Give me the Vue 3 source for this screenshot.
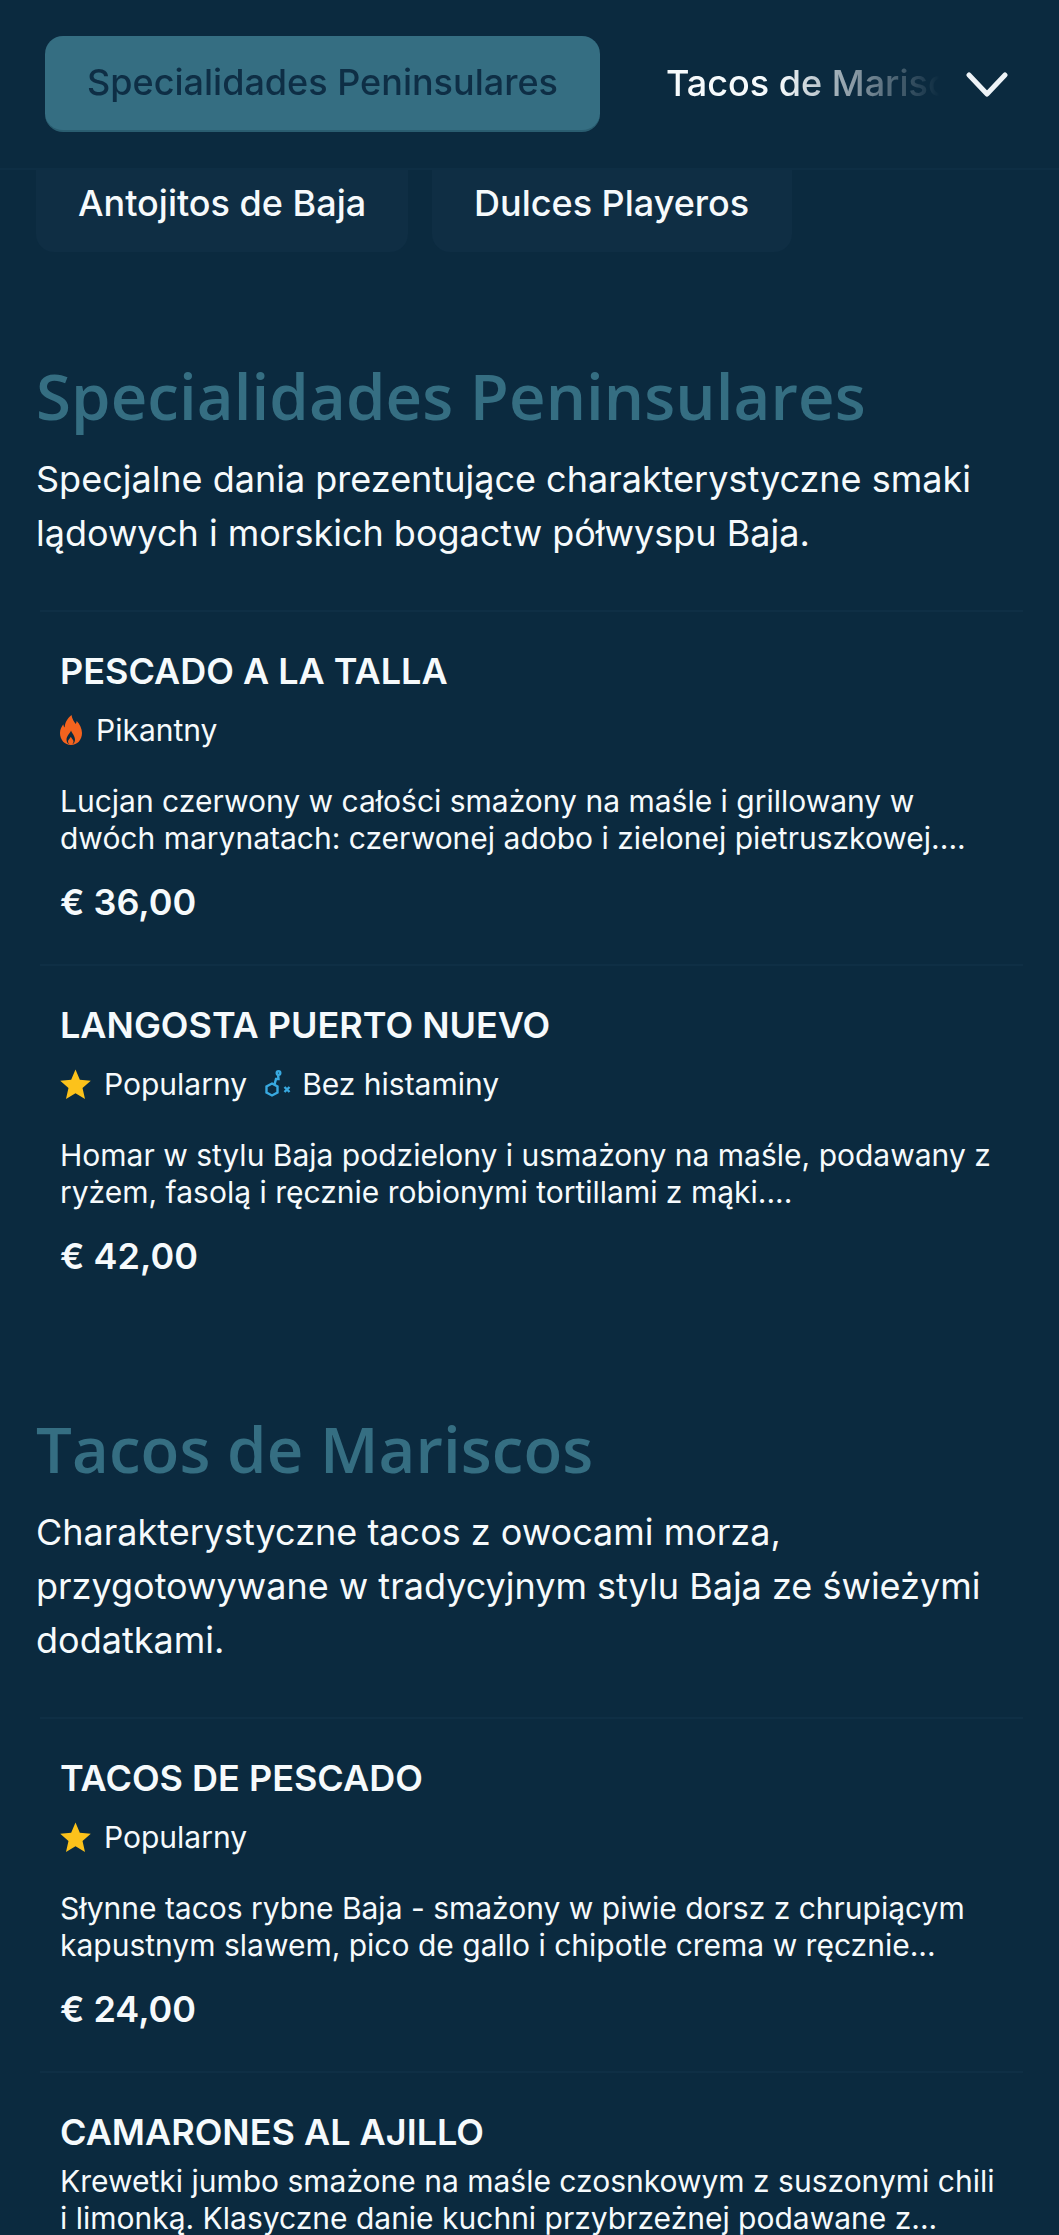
<script setup>
const sections = [
  {
    title: 'Specialidades Peninsulares',
    text: 'Specjalne dania prezentujące charakterystyczne smaki lądowych i morskich bogactw półwyspu Baja.',
    items: [
      { name: 'PESCADO A LA TALLA', tags: [['flame', 'Pikantny']], desc: 'Lucjan czerwony w całości smażony na maśle i grillowany w dwóch marynatach: czerwonej adobo i zielonej pietruszkowej....', price: '€ 36,00' },
      { name: 'LANGOSTA PUERTO NUEVO', tags: [['star', 'Popularny'], ['hist', 'Bez histaminy']], desc: 'Homar w stylu Baja podzielony i usmażony na maśle, podawany z ryżem, fasolą i ręcznie robionymi tortillami z mąki....', price: '€ 42,00' }
    ]
  },
  {
    title: 'Tacos de Mariscos',
    text: 'Charakterystyczne tacos z owocami morza, przygotowywane w tradycyjnym stylu Baja ze świeżymi dodatkami.',
    items: [
      { name: 'TACOS DE PESCADO', tags: [['star', 'Popularny']], desc: 'Słynne tacos rybne Baja - smażony w piwie dorsz z chrupiącym kapustnym slawem, pico de gallo i chipotle crema w ręcznie...', price: '€ 24,00' },
      { name: 'CAMARONES AL AJILLO', tags: [], desc: 'Krewetki jumbo smażone na maśle czosnkowym z suszonymi chili i limonką. Klasyczne danie kuchni przybrzeżnej podawane z...', price: '' }
    ]
  }
]
</script>

<template>
  <div class="page">
    <header class="top">
      <div class="tabs">
        <button class="tab active">Specialidades Peninsulares</button>
        <button class="tab plain">Tacos de Mariscos</button>
      </div>
      <svg class="chev" viewBox="0 0 42 26" width="42" height="26" aria-hidden="true">
        <polyline points="3,3 21,22 39,3" fill="none" stroke="#eef3f7" stroke-width="5" stroke-linecap="round" stroke-linejoin="round" />
      </svg>
    </header>
    <nav class="more">
      <a class="pill">Antojitos de Baja</a>
      <a class="pill">Dulces Playeros</a>
    </nav>
    <main>
      <section v-for="s in sections" :key="s.title" class="section">
        <h2>{{ s.title }}</h2>
        <p class="lead">{{ s.text }}</p>
        <article v-for="it in s.items" :key="it.name" class="item">
          <h3>{{ it.name }}</h3>
          <div v-if="it.tags.length" class="tags">
            <span v-for="t in it.tags" :key="t[1]" class="tag">
              <svg v-if="t[0] === 'flame'" class="ic-flame" viewBox="0 0 22 30" width="22" height="30" aria-hidden="true">
                <path fill="#f4631e" fill-rule="evenodd" d="M11.500 0c.6 4.200 2.600 6.600 4.300 9 .5-.9.8-1.900.9-3 3 3.200 5.300 7.400 5.300 12 0 7-4.800 12-11 12S0 25 0 18c0-3.600 1.500-6.400 3.300-8.800.2 1.400.6 2.500 1.400 3.400C4.900 7.400 7.700 3 11.500 0zM11 15.500c-.7 2.800-4.500 5-4.500 9.200 0 2.300 1.300 3.900 3 4.600-1-.7-1.500-1.600-1.500-2.700 0-1.900 2-2.900 2.800-4.900.8 2 2.700 3 2.700 4.900 0 1.100-.5 2-1.500 2.700 1.700-.7 3-2.300 3-4.600 0-4.200-3.200-6.400-4-9.200z" />
              </svg>
              <svg v-else-if="t[0] === 'star'" class="ic-star" viewBox="0 0 30 30" width="31" height="31" aria-hidden="true">
                <polygon fill="#fcc21b" points="15,.5 19.200,10.300 29.800,11.300 21.800,18.300 24.200,29 15,23.400 5.800,29 8.200,18.300 .2,11.300 10.800,10.300" />
              </svg>
              <svg v-else class="ic-hist" viewBox="0 0 26 28" width="26" height="28" aria-hidden="true">
                <g fill="none" stroke="#38a9e0" stroke-width="2.400">
                  <polygon points="7,13.500 12.500,16.500 12.500,22.500 7,25.500 1.500,22.500 1.500,16.500" />
                  <path d="M9.500 14.500 L11 9 L13.500 9 L13 4.500" />
                  <circle cx="13.500" cy="3" r="1.800" />
                  <path d="M19.500 17 L24.500 22 M24.500 17 L19.500 22" />
                </g>
              </svg>
              {{ t[1] }}
            </span>
          </div>
          <p class="desc" :class="{ tight: !it.tags.length }">{{ it.desc }}</p>
          <div v-if="it.price" class="price">{{ it.price }}</div>
        </article>
      </section>
    </main>
  </div>
</template>

<style>
html, body { margin: 0; background: #0b2a3f; }
</style>

<style scoped>
.page {
  width: 1059px;
  height: 2235px;
  overflow: hidden;
  background: #0b2a3f;
  color: #f6fafc;
  font-family: Inter, "Noto Sans", sans-serif;
}
.top {
  height: 170px;
  box-sizing: border-box;
  display: flex;
  align-items: flex-start;
  padding: 36px 51px 0 45px;
  border-bottom: 2px solid #0e2e44;
}
.tabs {
  display: flex;
  gap: 24px;
  width: 900px;
  overflow: hidden;
  -webkit-mask-image: linear-gradient(to right, #000 735px, transparent 895px);
  mask-image: linear-gradient(to right, #000 735px, transparent 895px);
}
.tab {
  flex: none;
  height: 96px;
  padding: 0 42px;
  border: 0;
  border-radius: 18px;
  font: 500 36px Inter, sans-serif;
  background: none;
  color: #f6fafc;
}
.active {
  width: 555px;
  padding: 0 0 2px;
  background: #356e82;
  color: #0e2e45;
  border-bottom: 2px solid #2a5d70;
}
.plain { padding: 0 0 2px 42px; }
.chev { flex: none; margin: 36px 0 0 22px; }
.more {
  display: flex;
  gap: 24px;
  padding: 0 36px;
  height: 82px;
}
.pill {
  height: 82px;
  box-sizing: border-box;
  padding-top: 11px;
  background: #0f2e44;
  border-radius: 0 0 18px 18px;
  font-size: 36px;
  line-height: 44px;
  font-weight: 500;
}
.pill:first-child { width: 372px; padding-left: 42px; }
.pill:last-child { width: 360px; padding-left: 42px; }
.section { margin: 0 36px; }
.section + .section { margin-top: 92px; }
main { padding-top: 105px; }
h2 {
  margin: 0;
  font: 600 63.500px/78px "Open Sans", Lato, sans-serif;
  letter-spacing: .1px;
  color: #356e82;
}
.lead {
  margin: 17px 0 50px;
  font-size: 36px;
  line-height: 54px;
}
.item {
  box-sizing: border-box;
  margin: 0 0 0 4px;
  padding: 37px 24px 40px 20px;
  border-top: 2px solid #0f2f45;
}
h3 {
  margin: 0;
  font-size: 36px;
  line-height: 44px;
  font-weight: 600;
}
.tags {
  display: flex;
  gap: 18px;
  margin-top: 15px;
  height: 44px;
  align-items: center;
}
.tag {
  display: flex;
  align-items: center;
  font-size: 30px;
  gap: 13px;
}
.tag:has(.ic-hist) { gap: 11px; }
.tag:has(.ic-flame) { gap: 14px; }
.desc {
  margin: 31px 0 0;
  font-size: 30px;
  line-height: 37px;
}
.desc.tight { margin-top: 9px; }
.price {
  margin-top: 23px;
  font-size: 36px;
  line-height: 44px;
  font-weight: 600;
}
</style>
